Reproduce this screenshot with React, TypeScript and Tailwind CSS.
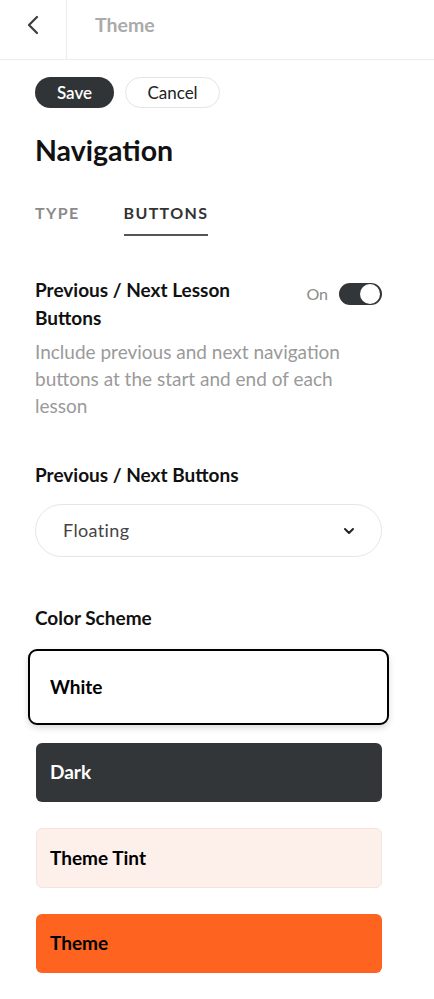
import React from "react";

export default function App() {
  return (
    <div className="min-h-[999px] bg-white text-black" style={{ fontFamily: "Lato, 'Noto Sans', sans-serif" }}>
      <div className="flex h-[60px] border-b border-[#ececec]">
        <div className="flex w-[67px] items-center justify-center border-r border-[#ececec]">
          <svg width="14" height="20" viewBox="0 0 14 20" fill="none" className="-ml-[1px] -mt-[10px]">
            <polyline points="11,2 3,10 11,18" stroke="#3a3d40" strokeWidth="2.2" strokeLinecap="round" strokeLinejoin="round" />
          </svg>
        </div>
        <div className="flex items-center pl-[28px] pb-[10px] text-[19.5px] font-bold text-[#aaaaaa]">Theme</div>
      </div>

      <div className="pl-[35px] pr-[52px]">
        <div className="mt-[17px] flex gap-[11px]">
          <button className="flex h-[31px] w-[79px] items-center justify-center rounded-full bg-[#313437] text-[17px] font-semibold text-white">Save</button>
          <button className="flex h-[31px] w-[95px] items-center justify-center rounded-full border border-[#e4e4e4] bg-white text-[17px] text-[#222]">Cancel</button>
        </div>

        <h1 className="mt-[25px] text-[28.5px] font-bold leading-[34px] text-[#111]">Navigation</h1>

        <div className="mt-[36px] flex gap-[44px] text-[16px] font-bold tracking-[0.085em] leading-[20px]">
          <div className="pb-[11px] text-[#8a8a8a]">TYPE</div>
          <div className="border-b-2 border-[#555] pb-[11px] text-[#333]">BUTTONS</div>
        </div>

        <div className="mt-[40px] flex items-start justify-between">
          <div className="w-[240px] text-[19px] font-bold leading-[28px] text-[#111]">Previous / Next Lesson Buttons</div>
          <div className="mt-[6px] flex items-center gap-[11px]">
            <span className="text-[16px] text-[#8a8a8a]">On</span>
            <div className="flex h-[22px] w-[43px] items-center justify-end rounded-full bg-[#333639] pr-[2px]">
              <div className="h-[20px] w-[20px] rounded-full bg-white" />
            </div>
          </div>
        </div>
        <p className="mt-[6px] text-[19px] leading-[27px] text-[#9a9a9a]">
          Include previous and next navigation buttons at the start and end of each lesson
        </p>

        <div className="mt-[42px] text-[19px] font-bold leading-[28px] text-[#111]">Previous / Next Buttons</div>
        <div className="mt-[15px] flex h-[53px] items-center justify-between rounded-full border border-[#e6e6e6] pl-[27px] pr-[26px]">
          <span className="text-[18px] tracking-[0.02em] text-[#444]">Floating</span>
          <svg width="12" height="8" viewBox="0 0 12 8" fill="none">
            <polyline points="2,2 6,6 10,2" stroke="#222" strokeWidth="2" strokeLinecap="round" strokeLinejoin="round" />
          </svg>
        </div>

        <div className="mt-[47px] text-[19px] font-bold leading-[28px] text-[#111]">Color Scheme</div>

        <div className="-mx-[7px] mt-[17px] flex h-[76px] items-center rounded-[9px] border-2 border-black bg-white pl-[20px] text-[19px] font-bold shadow-[0_3px_6px_rgba(0,0,0,0.15)]">White</div>
        <div className="ml-[1px] mt-[18px] flex h-[59px] items-center rounded-[6px] bg-[#333639] pl-[14px] text-[19px] font-bold text-white">Dark</div>
        <div className="ml-[1px] mt-[26px] flex h-[60px] items-center rounded-[6px] border border-[#f6e4dc] bg-[#fdefe9] pl-[13px] text-[19px] font-bold text-black">Theme Tint</div>
        <div className="ml-[1px] mt-[26px] flex h-[59px] items-center rounded-[6px] bg-[#fe641f] pl-[14px] text-[19px] font-bold text-black">Theme</div>
      </div>
    </div>
  );
}
